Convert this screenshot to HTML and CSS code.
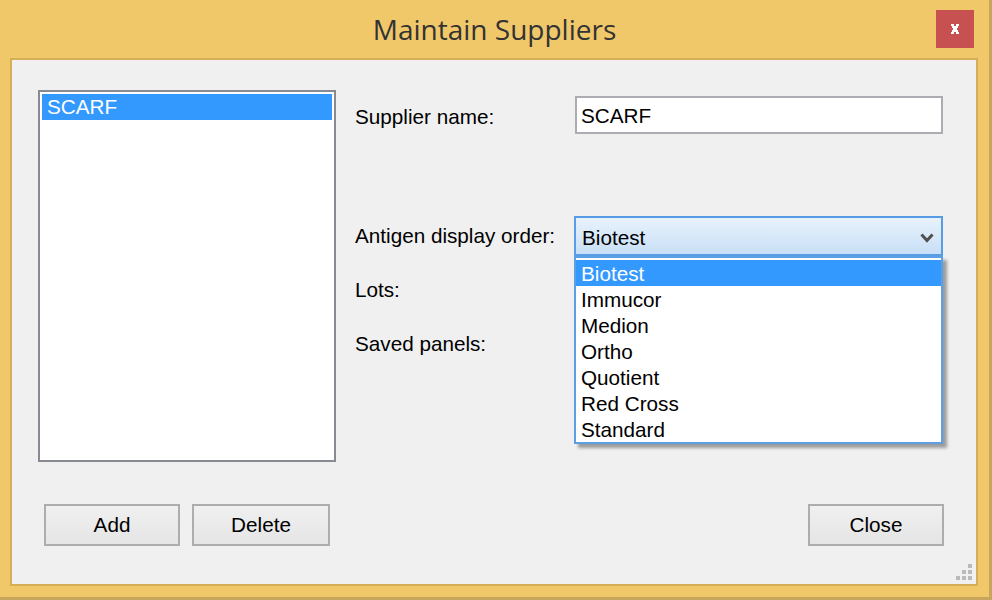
FILE: index.html
```html
<!DOCTYPE html>
<html lang="en">
<head>
<meta charset="utf-8">
<title>Maintain Suppliers</title>
<link rel="stylesheet" href="styles.css">
</head>
<body>
<div class="window">
  <header class="titlebar">
    <h1 class="title">Maintain Suppliers</h1>
    <button class="close-btn" aria-label="Close">
      <svg class="close-icon" width="8" height="10" viewBox="0 0 8 10" shape-rendering="crispEdges">
        <rect x="0" y="0" width="3" height="2" fill="#fff"/>
        <rect x="5" y="0" width="3" height="2" fill="#fff"/>
        <rect x="1" y="2" width="3" height="2" fill="#fff"/>
        <rect x="4" y="2" width="3" height="2" fill="#fff"/>
        <rect x="2" y="4" width="4" height="2" fill="#fff"/>
        <rect x="1" y="6" width="3" height="2" fill="#fff"/>
        <rect x="4" y="6" width="3" height="2" fill="#fff"/>
        <rect x="0" y="8" width="3" height="2" fill="#fff"/>
        <rect x="5" y="8" width="3" height="2" fill="#fff"/>
      </svg>
    </button>
  </header>
  <main class="client">
    <div class="content">
      <div class="listbox">
        <div class="list-item selected">SCARF</div>
      </div>
      <div class="form">
        <div class="row row-name">
          <span class="label label-name">Supplier name:</span>
          <div class="textbox">SCARF</div>
        </div>
        <div class="row row-order">
          <span class="label">Antigen display order:</span>
          <div class="combo-wrap">
            <div class="combo">
              <span>Biotest</span>
              <svg class="chevron" width="14" height="10" viewBox="0 0 14 10">
                <path d="M1.5 1.5 L7 7.5 L12.5 1.5" fill="none" stroke="#505050" stroke-width="3"/>
              </svg>
            </div>
            <ul class="dropdown">
              <li class="option selected">Biotest</li>
              <li class="option">Immucor</li>
              <li class="option">Medion</li>
              <li class="option">Ortho</li>
              <li class="option">Quotient</li>
              <li class="option">Red Cross</li>
              <li class="option">Standard</li>
            </ul>
          </div>
        </div>
        <div class="row">
          <span class="label">Lots:</span>
        </div>
        <div class="row">
          <span class="label">Saved panels:</span>
        </div>
      </div>
    </div>
    <div class="buttons">
      <div class="btn-group">
        <button class="btn">Add</button>
        <button class="btn btn-wide">Delete</button>
      </div>
      <button class="btn">Close</button>
    </div>
    <svg class="grip" width="16" height="16" viewBox="0 0 16 16" shape-rendering="crispEdges">
      <rect x="12" y="0" width="4" height="4" fill="#bababa"/>
      <rect x="6" y="6" width="4" height="4" fill="#bababa"/>
      <rect x="12" y="6" width="4" height="4" fill="#bababa"/>
      <rect x="0" y="12" width="4" height="4" fill="#bababa"/>
      <rect x="6" y="12" width="4" height="4" fill="#bababa"/>
      <rect x="12" y="12" width="4" height="4" fill="#bababa"/>
    </svg>
  </main>
</div>
</body>
</html>
```

FILE: styles.css
```css
* {
  box-sizing: border-box;
}

body {
  margin: 0;
  font-family: "Liberation Sans", Arial, sans-serif;
  font-size: 20.7px;
  color: #000;
}

.window {
  width: 992px;
  height: 600px;
  background: #f0c86a;
  border-right: 3px solid #c8a55c;
  border-bottom: 3px solid #c8a55c;
  display: flex;
  flex-direction: column;
}

.titlebar {
  height: 58px;
  flex: none;
  display: grid;
  grid-template-columns: 1fr auto 1fr;
  align-items: start;
}

.title {
  grid-column: 2;
  margin: 0;
  font-family: "Open Sans", sans-serif;
  font-weight: 400;
  font-size: 28px;
  line-height: 58px;
  color: #333;
}

.close-btn {
  grid-column: 3;
  justify-self: end;
  margin: 10px 15px 0 0;
  width: 38px;
  height: 38px;
  padding: 0;
  border: 0;
  background: #c75050;
  display: flex;
  align-items: center;
  justify-content: center;
}

.client {
  flex: 1;
  margin: 0 11px 11px 10px;
  border: 2px solid #d5ae58;
  background: #f0f0f0;
  position: relative;
  display: flex;
  flex-direction: column;
}

.content {
  display: flex;
  padding: 30px 33px 0 26px;
}

.listbox {
  width: 298px;
  height: 372px;
  flex: none;
  border: 2px solid #878a92;
  background: #fff;
  padding: 2px;
}

.list-item {
  height: 26px;
  line-height: 26px;
  padding-left: 5px;
}

.list-item.selected {
  background: #3399ff;
  color: #fff;
}

.form {
  flex: 1;
  margin-left: 19px;
}

.row {
  display: flex;
  align-items: center;
  height: 40px;
  margin-top: 14px;
}

.row-name {
  height: 38px;
  margin-top: 6px;
}

.row-order {
  margin-top: 82px;
}

.label {
  width: 220px;
  flex: none;
}

.label-name {
  padding-top: 4px;
}

.textbox {
  width: 368px;
  height: 38px;
  border: 2px solid #abadb3;
  background: #fff;
  padding-left: 4px;
  line-height: 35px;
}

.combo-wrap {
  position: relative;
  width: 369px;
  height: 40px;
  margin-left: -1px;
}

.combo {
  height: 40px;
  border: 2px solid #569de5;
  background: linear-gradient(#e8f2fc, #c8dff7);
  display: flex;
  align-items: center;
  justify-content: space-between;
  padding: 3px 7px 0 6px;
}

.chevron {
  display: block;
}

.dropdown {
  position: absolute;
  top: 100%;
  left: 0;
  right: 0;
  margin: 0;
  padding: 2px 0 0;
  list-style: none;
  border: 2px solid #5c9fe2;
  background: #fff;
  box-shadow: 4px 4px 3px rgba(0, 0, 0, 0.35);
  z-index: 2;
}

.option {
  height: 26px;
  line-height: 27px;
  padding-left: 5px;
}

.option.selected {
  background: #3399ff;
  color: #fff;
}

.buttons {
  display: flex;
  justify-content: space-between;
  padding: 0 32px;
  margin-top: 42px;
}

.btn-group {
  display: flex;
  gap: 12px;
}

.btn {
  width: 136px;
  height: 42px;
  padding: 0;
  border: 2px solid #adadad;
  background: linear-gradient(#f0f0f0, #e5e5e5);
  font-family: "Liberation Sans", Arial, sans-serif;
  font-size: 20.7px;
  color: #000;
}

.btn-wide {
  width: 138px;
}

.grip {
  position: absolute;
  right: 4px;
  bottom: 4px;
}
```
